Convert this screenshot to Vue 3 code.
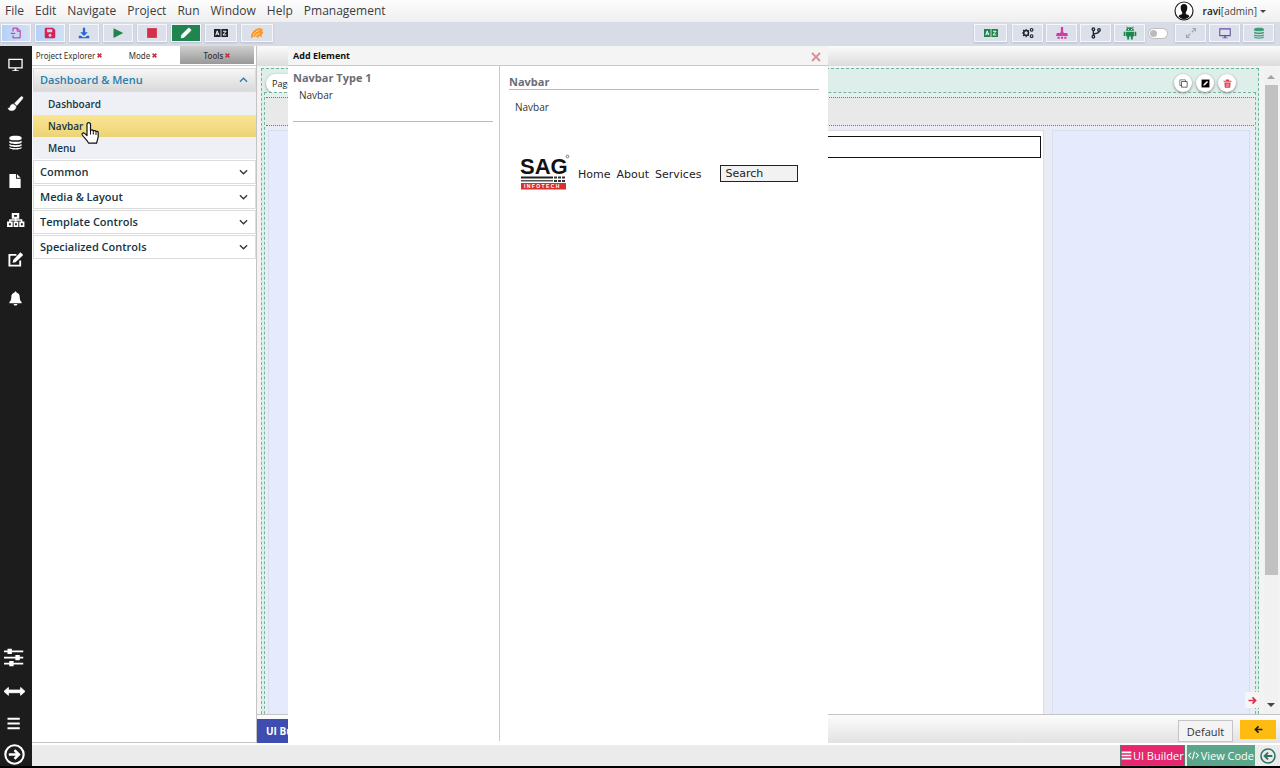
<template>
  <div class="ide">
    <!-- 顶部菜单 -->
    <header class="menubar">
      <nav class="menus">
        <a v-for="m in menus" :key="m" href="#" class="menu-link">{{ m }}</a>
      </nav>
      <button class="user">
        <svg class="avatar" viewBox="0 0 20 20" v-html="icons.avatar" />
        <span><b>ravi</b>[admin]</span>
        <i class="caret" />
      </button>
    </header>

    <!-- 工具栏 -->
    <div class="toolbar">
      <div class="tools">
        <button v-for="t in leftTools" :key="t.icon" class="tool" :class="t.cls" :aria-label="t.label">
          <svg class="ico" viewBox="0 0 16 16" v-html="icons[t.icon]" />
        </button>
      </div>
      <div class="tools right">
        <button v-for="t in rightTools" :key="t.icon" class="tool" :class="t.cls" :aria-label="t.label">
          <svg class="ico" viewBox="0 0 16 16" v-html="icons[t.icon]" />
        </button>
        <input v-model="live" type="checkbox" class="switch" aria-label="Live mode" />
        <button v-for="t in viewTools" :key="t.icon" class="tool" :class="t.cls" :aria-label="t.label">
          <svg class="ico" viewBox="0 0 16 16" v-html="icons[t.icon]" />
        </button>
      </div>
    </div>

    <div class="body">
      <!-- 左侧图标栏 -->
      <aside class="rail">
        <div class="rail-top">
          <button v-for="r in railTop" :key="r" class="rail-btn" :aria-label="r">
            <svg class="rail-ico" viewBox="0 0 16 16" v-html="icons[r]" />
          </button>
        </div>
        <div class="rail-bottom">
          <button v-for="r in railBottom" :key="r" class="rail-btn" :aria-label="r">
            <svg class="rail-ico big" viewBox="0 0 24 24" v-html="icons[r]" />
          </button>
        </div>
      </aside>

      <div class="main">
        <div class="workspace">
          <section class="panel">
            <div class="tabs">
              <button v-for="t in tabs" :key="t" class="tab" :class="{ active: t === activeTab }" @click="activeTab = t">
                {{ t }} <svg class="tab-x" viewBox="0 0 8 8" v-html="icons.cross" />
              </button>
            </div>
            <div class="accordion">
              <div v-for="g in groups" :key="g.title" class="group">
                <button class="group-head" :class="{ open: g.title === openGroup }" @click="openGroup = g.title">
                  {{ g.title }}
                  <svg class="chev" viewBox="0 0 10 6"><path d="M1 1l4 4 4-4" fill="none" stroke="currentColor" stroke-width="1.4" /></svg>
                </button>
                <ul v-if="g.title === openGroup && g.items.length" class="items">
                  <li v-for="it in g.items" :key="it">
                    <button class="item" :class="{ hover: it === current }" @click="current = it">{{ it }}</button>
                  </li>
                </ul>
              </div>
            </div>
          </section>

          <section class="editor">
            <div class="editor-top" />
            <div class="stage">
              <div class="page">
                <div class="page-head">
                  <span class="page-tag">Page</span>
                  <div class="page-actions">
                    <button class="round" aria-label="Copy"><svg viewBox="0 0 16 16" v-html="icons.copy" /></button>
                    <button class="round" aria-label="Edit"><svg viewBox="0 0 16 16" v-html="icons.editBox" /></button>
                    <button class="round red" aria-label="Delete"><svg viewBox="0 0 16 16" v-html="icons.trash" /></button>
                  </div>
                </div>
                <div class="page-inner">
                  <div class="row-strip" />
                  <div class="cols">
                    <div class="col side" />
                    <div class="col center"><input class="field" type="text" aria-label="Field" /></div>
                    <div class="col side" />
                  </div>
                </div>
                <button class="next" aria-label="Next"><svg viewBox="0 0 16 16" v-html="icons.arrow" /></button>
              </div>
              <div class="scroll">
                <i class="sc-arrow up" />
                <div class="sc-track"><div class="sc-thumb" /></div>
                <i class="sc-arrow down" />
              </div>
            </div>
            <div class="editor-foot">
              <button class="ui-tab">UI Builder</button>
              <div class="foot-right">
                <button class="default-btn">Default</button>
                <button class="back-btn" aria-label="Back"><svg viewBox="0 0 16 16" v-html="icons.arrow" /></button>
              </div>
            </div>
          </section>

          <!-- 添加元素弹窗 -->
          <div class="dialog" role="dialog" aria-label="Add Element">
            <div class="dialog-head">
              Add Element
              <button class="close" aria-label="Close"><svg viewBox="0 0 10 10"><path d="M1 1l8 8M9 1L1 9" stroke="currentColor" stroke-width="1.8" /></svg></button>
            </div>
            <div class="dialog-body">
              <div class="types">
                <h3>Navbar Type 1</h3>
                <a href="#" class="type-link">Navbar</a>
              </div>
              <div class="preview">
                <h3>Navbar</h3>
                <p>Navbar</p>
                <div class="sample">
                  <svg class="logo" viewBox="0 0 50 37">
                    <text x="0" y="20" class="logo-name">SAG</text>
                    <circle cx="47.500" cy="2.500" r="1.300" fill="none" stroke="#555" stroke-width="0.800" />
                    <path d="M1 22.500h32v2H1z" fill="#222" />
                    <path d="M1 26h32v1.500H1z" fill="#555" />
                    <path d="M34 22.500h3v2h-3zM38 22.500h3v2h-3zM42 22.500h3v2h-3zM34 26h3v2h-3zM38 26h3v2h-3zM42 26h3v2h-3z" fill="#333" />
                    <path d="M1 29h45v6.500H1z" fill="#d9302c" />
                    <text x="4" y="34" class="logo-sub">I N F O T E C H</text>
                  </svg>
                  <a href="#">Home</a>
                  <a href="#">About</a>
                  <a href="#">Services</a>
                  <input class="search" type="text" placeholder="Search" aria-label="Search" />
                </div>
              </div>
            </div>
          </div>
        </div>

        <footer class="status">
          <button class="st pink"><svg viewBox="0 0 16 16" v-html="icons.bars" />UI Builder</button>
          <button class="st mint"><svg viewBox="0 0 16 16" v-html="icons.code" />View Code</button>
          <button class="st-round" aria-label="Collapse"><svg viewBox="0 0 24 24" v-html="icons.circleRight" /></button>
        </footer>
      </div>
    </div>

    <svg class="cursor" viewBox="0 0 18 24">
      <path d="M6 13V3a1.800 1.800 0 0 1 3.500 0v7c.3-1.500 2.700-1.400 2.900.3.500-1.200 2.400-1 2.600.6.500-1 2.100-.7 2.200.7v4c0 2.500-1.200 3.500-1.600 6.500H7.500C6.500 19.500 3.600 17.500 1.300 14c-.9-1.600.8-2.600 2.200-1.600L6 14.600z" fill="#fff" stroke="#111" stroke-width="1.200" stroke-linejoin="round" />
      <path d="M9.500 10v3.500M12.300 10.500v3M15 11.500v2.500" stroke="#111" stroke-width="1" />
    </svg>
  </div>
</template>

<script setup>
import { ref } from 'vue'

const menus = ['File', 'Edit', 'Navigate', 'Project', 'Run', 'Window', 'Help', 'Pmanagement']
const tabs = ['Project Explorer', 'Mode', 'Tools']
const groups = [
  { title: 'Dashboard & Menu', items: ['Dashboard', 'Navbar', 'Menu'] },
  { title: 'Common', items: [] },
  { title: 'Media & Layout', items: [] },
  { title: 'Template Controls', items: [] },
  { title: 'Specialized Controls', items: [] },
]

const activeTab = ref('Tools')
const openGroup = ref('Dashboard & Menu')
const current = ref('Navbar')
const live = ref(false)

const leftTools = [
  { icon: 'file', label: 'New', cls: 'magenta blue-bg' },
  { icon: 'save', label: 'Save', cls: 'crimson blue-bg' },
  { icon: 'download', label: 'Download', cls: 'blue' },
  { icon: 'play', label: 'Run', cls: 'green' },
  { icon: 'stop', label: 'Stop', cls: 'red' },
  { icon: 'pencil', label: 'Edit', cls: 'solid' },
  { icon: 'az', label: 'Translate', cls: 'black wide' },
  { icon: 'swift', label: 'Deploy', cls: 'orange wide' },
]
const rightTools = [
  { icon: 'az', label: 'Language', cls: 'green large' },
  { icon: 'cogs', label: 'Settings', cls: 'black' },
  { icon: 'stamp', label: 'Publish', cls: 'violet' },
  { icon: 'branch', label: 'Branch', cls: 'black' },
  { icon: 'android', label: 'Android', cls: 'green large' },
]
const viewTools = [
  { icon: 'expand', label: 'Expand', cls: 'grey' },
  { icon: 'screen', label: 'Preview', cls: 'purple' },
  { icon: 'db', label: 'Database', cls: 'teal' },
]
const railTop = ['screen', 'brush', 'db', 'page', 'network', 'edit', 'bell']
const railBottom = ['sliders', 'leftRight', 'menu', 'circleRight']

const icons = {
  avatar: '<circle cx="10" cy="10" r="9" fill="#fff" stroke="#222" stroke-width="1.200"/><path d="M10 3c2.500 0 3.600 1.800 3.300 4.200-.2 2-.9 3.200-1.500 4v1.800c1.500.7 3 .9 3.700 2.200A8.500 8.500 0 0 1 10 18.500a8.500 8.500 0 0 1-5.500-3.300c.7-1.300 2.200-1.500 3.700-2.200v-1.800c-.6-.8-1.300-2-1.500-4C6.400 4.800 7.500 3 10 3z" fill="#111"/>',
  file: '<path d="M4 6V1.500h6L13.500 5V14.500H4V11M9.500 1.500v4h4M1 8.500h6" fill="none" stroke="currentColor" stroke-width="1.300"/>',
  save: '<path d="M1 2.500A1.500 1.500 0 0 1 2.500 1H12l3 3v9.500a1.500 1.500 0 0 1-1.500 1.500h-11A1.500 1.500 0 0 1 1 13.500zM4 3v4h7V3zm4 6a2 2 0 1 0 0 4 2 2 0 0 0 0-4z" fill="currentColor" fill-rule="evenodd"/>',
  download: '<path d="M6.500 1h3v6H13l-5 5-5-5h3.500zM1 11.500h3l2.500 2h3l2.500-2h3V15H1z" fill="currentColor"/>',
  play: '<path d="M2 1.500v13L15 8z" fill="currentColor"/>',
  stop: '<path d="M1.500 1.500h13v13h-13z" fill="currentColor"/>',
  pencil: '<path d="M1.500 14.500l.8-4L11 1.800c.5-.5 1.200-.5 1.700 0l1.500 1.500c.5.500.5 1.200 0 1.700L5.500 13.700z" fill="currentColor" stroke="currentColor"/>',
  az: '<path d="M0 3.500h7.500v9H0zM8.500 3.500H16v9H8.500z" fill="currentColor"/><path d="M2 10.500l1.700-5 1.800 5M2.700 9h2.200M10.300 6h3.500l-3.500 4.200h3.700" fill="none" stroke="#fff" stroke-width="1.100"/>',
  swift: '<path d="M1 14c0-5 2-9 7-11 2-1 4-1 5 0l2 1-1 2 1.500 2-2 1c.5 1.500 0 3-.5 4l-2-2-2 3c-1-1-1-2-3-2s-3 1-5 2z" fill="currentColor"/><path d="M4 11c1-3 3-5 6-6M6 12c1-2 3-3 5-3.500" fill="none" stroke="#fdebd2" stroke-width="0.900"/>',
  cogs: '<circle cx="5.500" cy="8" r="3.200" fill="none" stroke="currentColor" stroke-width="2"/><path d="M5.500 2.500v2M5.500 11.500v2M0 8h2M1.500 4l1.500 1.500M1.500 12L3 10.500M9 4.500L8 5.500M9 11.500l-1-1" stroke="currentColor" stroke-width="1.500"/><circle cx="12.800" cy="3.800" r="1.800" fill="none" stroke="currentColor" stroke-width="1.500"/><circle cx="12.800" cy="12.200" r="1.800" fill="none" stroke="currentColor" stroke-width="1.500"/>',
  stamp: '<path d="M6.500 0h3v6l1 2h4.500l1 4H0l1-4h4.500l1-2zM2 13h3v2.500H2zM6.500 13h3v2.500h-3zM11 13h3v2.500h-3z" fill="currentColor"/>',
  branch: '<circle cx="4.500" cy="3" r="1.700" fill="none" stroke="currentColor" stroke-width="1.700"/><circle cx="4.500" cy="13" r="1.700" fill="none" stroke="currentColor" stroke-width="1.700"/><circle cx="12" cy="4" r="1.700" fill="none" stroke="currentColor" stroke-width="1.700"/><path d="M4.500 4.500v7M12 5.500c0 3.500-5 2.500-7.500 4.500" fill="none" stroke="currentColor" stroke-width="1.800"/>',
  android: '<path d="M3.500 5.500a4.500 4 0 0 1 9 0zM3.500 6.500h9V12h-1.300v3.500H9V12H7v3.500H4.800V12H3.500zM.8 6.500h2v5h-2zM13.200 6.500h2v5h-2zM4.500.5l1.500 2-.8.5-1.500-2zM11.500.5L10 2.500l.8.5 1.500-2z" fill="currentColor"/><path d="M5.800 3.500h1v1h-1zM9.200 3.500h1v1h-1z" fill="#fff"/>',
  expand: '<path d="M10 2h4v4M14 2L9 7M6 14H2v-4M2 14l5-5" fill="none" stroke="currentColor" stroke-width="1.500"/>',
  screen: '<path d="M1 2.500h14v9H1z" fill="none" stroke="currentColor" stroke-width="1.400"/><path d="M7 12h2v2h2.500v1h-7v-1H7z" fill="currentColor"/>',
  db: '<path d="M1.500 2.800C1.500.2 14.500.2 14.500 2.800v1.400c0 2-13 2-13 0zM1.500 6c2 1.700 11 1.700 13 0v2c0 2-13 2-13 0zM1.500 9.600c2 1.700 11 1.700 13 0v1.600c0 2-13 2-13 0zM1.500 12.800c2 1.700 11 1.700 13 0v.8c0 2.600-13 2.600-13 0z" fill="currentColor"/>',
  brush: '<path d="M15.300.8c.8.700.5 1.700 0 2.500L9.500 10 7 7.800l6.300-6.500c.6-.6 1.400-1 2-.5zM6 8.800L8.500 11c.2 3-2 4.500-4.500 4.500-2 0-3.500-.8-4-2.500 1 .2 2 0 2.200-1.200C2.500 9.800 4 8.500 6 8.800z" fill="currentColor" stroke="currentColor" stroke-width="0.600"/>',
  page: '<path d="M1.500 0h7v5h5v10h-12zM9.500 0l4 4h-4z" fill="currentColor"/>',
  network: '<path d="M4 0h8v6H4zM-1 9h6v6h-6zM6 9h5v6H6zM12 9h5.500v6H12z" fill="currentColor"/><path d="M6.500 2h3v2h-3zM1 11h2v2H1zM7.500 11h2v2h-2zM13.800 11h2v2h-2z" fill="#1c1c1c"/><path d="M8.200 5v4M2 9.500v-2h12.500v2" fill="none" stroke="currentColor" stroke-width="1.600"/>',
  edit: '<path d="M9 3H1.500v11.500H13V9" fill="none" stroke="currentColor" stroke-width="2"/><path d="M5 11.500l.5-3L12.500 1c.5-.5 1-.5 1.500 0l1.500 1.500c.5.500.5 1 0 1.500L8 11z" fill="currentColor"/>',
  bell: '<path d="M8 .5c.8 0 1 .5 1 1.200 2.500.6 3.500 2.500 3.500 5 0 3 .8 4 2 5v1.300h-13v-1.300c1.200-1 2-2 2-5 0-2.500 1-4.400 3.500-5 0-.7.200-1.200 1-1.200zM6 13.800h4c0 2.300-4 2.300-4 0z" fill="currentColor"/>',
  sliders: '<path d="M0 5h22M0 12h22M0 19h22" stroke="currentColor" stroke-width="2"/><path d="M4 2h5v6H4zM13 9h5v6h-5zM6 16h5v6H6z" fill="currentColor"/>',
  leftRight: '<path d="M0 13l5-4.500V11.500h14V8.500l5 4.500-5 4.500V14.500H5v3z" fill="currentColor" stroke="currentColor"/>',
  menu: '<path d="M4 6.500h14M4 12h14M4 17.500h14" stroke="currentColor" stroke-width="2.400"/>',
  circleRight: '<circle cx="12" cy="12" r="10.500" fill="none" stroke="currentColor" stroke-width="2.400"/><path d="M5.500 12h11M12 7l5 5-5 5" fill="none" stroke="currentColor" stroke-width="3"/>',
  cross: '<path d="M1 1l6 6M7 1L1 7" stroke="currentColor" stroke-width="2.400"/>',
  copy: '<path d="M1.500 1.500h10v10h-10z" fill="none" stroke="currentColor"/><path d="M4.500 4.500h10v10h-10z" fill="#fff" stroke="currentColor" stroke-width="1.200"/>',
  editBox: '<path d="M1 1h14v14H1z" fill="#000"/><path d="M4 12l1-3 5.500-5.500 2 2L7 11z" fill="#fff"/>',
  trash: '<path d="M5 1h6v2h4v2H1V3h4zM2.500 6h11l-.7 9.500H3.200z" fill="currentColor"/><path d="M6 8v6M8 8v6M10 8v6" stroke="#f3b9be"/>',
  arrow: '<path d="M1 8h12M8 2.500L13.500 8 8 13.500" fill="none" stroke="currentColor" stroke-width="3"/>',
  bars: '<path d="M1 3.500h14M1 8h14M1 12.500h14" stroke="currentColor" stroke-width="2.500"/>',
  code: '<path d="M4.500 4L1 8l3.500 4M11.500 4L15 8l-3.500 4M9.500 2.500l-3 11" fill="none" stroke="currentColor" stroke-width="1.600"/>',
}
</script>

<style>
body { background: #fff; overflow: hidden; }
</style>

<style scoped>
.ide {
  height: 100vh;
  box-sizing: border-box;
  display: flex;
  flex-direction: column;
  position: relative;
  border-bottom: 2px solid #000;
  font-family: 'Open Sans', 'Noto Sans', sans-serif;
  color: #333;
}
.ide *, .ide *::before { box-sizing: border-box; }
button { font-family: inherit; margin: 0; padding: 0; border: none; background: none; cursor: pointer; }
a { text-decoration: none; color: inherit; }
svg { display: block; overflow: visible; flex-shrink: 0; }

/* 菜单 */
.menubar {
  height: 22px;
  flex-shrink: 0;
  display: flex;
  justify-content: space-between;
  background: linear-gradient(#fdfdfd, #f0eff0);
}
.menus { display: flex; gap: 11px; padding-left: 5px; }
.menu-link { font-size: 12px; line-height: 22px; color: #3c3c3c; }
.user { display: flex; align-items: center; gap: 9px; padding-right: 14px; font-size: 10px; color: #444; }
.user b { color: #222; font-weight: 600; }
.avatar { width: 20px; height: 20px; }
.caret { border: 3px solid transparent; border-top-color: #444; border-bottom: 0; margin-left: -6px; }

/* 工具栏 */
.toolbar {
  height: 24px;
  flex-shrink: 0;
  display: flex;
  justify-content: space-between;
  align-items: center;
  padding: 0 6px 2px 1px;
  background: #d8dce7;
}
.tools { display: flex; align-items: center; gap: 4px; }
.tools.right { gap: 3px; }
.tool {
  width: 30px;
  height: 18px;
  display: flex;
  align-items: center;
  justify-content: center;
  border: 1px solid #f5f7fb;
  background: #dce0ea;
  box-shadow: 0 1px 2px #b9bfce;
}
.right .tool { width: 31px; }
.right .tool:first-child { width: 33px; margin-right: 2px; }
.tool.wide { width: 32px; }
.ico { width: 12px; height: 12px; }
.tool.blue-bg { background: linear-gradient(90deg, #b5d1f8, #d3e0f5); }
.magenta { color: #c3248d; }
.crimson { color: #dc1f4c; }
.blue { color: #2766d2; }
.green { color: #1d854c; }
.red { color: #d63049; }
.tool.solid { background: #1f8450; color: #fff; }
.black { color: #1d2126; }
.orange { color: #fb9a26; }
.violet { color: #d63ba4; }
.grey { color: #a3a6b0; }
.purple { color: #6a4cae; }
.teal { color: #3f9c78; }
.wide .ico, .large .ico { width: 14px; height: 14px; }
.switch {
  appearance: none;
  width: 20px;
  height: 11px;
  margin: 0 4px 0 0;
  padding: 1px;
  border: 1px solid #bbb;
  border-radius: 6px;
  background: #fff;
}
.switch::before { content: ''; display: block; width: 7px; height: 7px; border-radius: 50%; background: #bbb; }
.switch:checked::before { margin-left: 9px; }

.body { flex: 1; display: flex; min-height: 0; }

/* 图标栏 */
.rail {
  width: 32px;
  flex-shrink: 0;
  display: flex;
  flex-direction: column;
  justify-content: space-between;
  background: #1c1c1c;
  color: #fff;
}
.rail-btn { display: flex; align-items: center; justify-content: center; width: 31px; color: #fff; }
.rail-top .rail-btn { height: 39px; padding-bottom: 2px; }
.rail-bottom .rail-btn { height: 33px; width: 28px; }
.rail-bottom .rail-btn:last-child { height: 26px; padding-top: 2px; }
.rail-ico { width: 15px; height: 15px; }
.rail-ico.big { width: 21px; height: 21px; }

.main { flex: 1; min-width: 0; display: flex; flex-direction: column; }
.workspace { flex: 1; min-height: 0; display: flex; position: relative; padding-bottom: 2px; }

/* 工具面板 */
.panel { width: 225px; flex-shrink: 0; border-right: 1px solid #c4c4c4; border-bottom: 1px solid #c4c4c4; background: #fff; }
.tabs { display: flex; height: 20px; padding-right: 2px; border-bottom: 1px solid #ccc; }
.tab { flex: 1; display: flex; align-items: center; justify-content: center; gap: 2px; height: 18px; font-family: 'Noto Sans', sans-serif; font-size: 8px; color: #333; white-space: nowrap; }
.tab.active { background: linear-gradient(#cfcfcf, #989898); font-weight: 500; }
.tab-x { width: 5px; height: 5px; color: #c62f42; }
.accordion { display: flex; flex-direction: column; gap: 1px; padding: 2px 0 0 1px; }
.group-head {
  width: 100%;
  height: 24px;
  display: flex;
  align-items: center;
  justify-content: space-between;
  padding: 0 7px 1px 6px;
  border: 1px solid #dcdcdc;
  background: #fff;
  font-size: 11px;
  font-weight: 600;
  color: #163442;
}
.group-head.open { background: linear-gradient(#f7f7f7, #d9d9d9); color: #2a7eae; }
.chev { width: 9px; height: 6px; color: #333; }
.open .chev { transform: rotate(180deg); color: #2a7eae; }
.items { list-style: none; margin: 0; padding: 1px 0 0; background: #eef0f6; }
.item { display: block; width: 100%; height: 22px; padding: 0 15px; text-align: left; font-size: 10px; font-weight: 600; color: #163442; }
.item.hover { background: linear-gradient(#fae593, #ecd376); }

/* 画布 */
.editor { flex: 1; min-width: 0; display: flex; flex-direction: column; }
.editor-top { height: 20px; flex-shrink: 0; background: linear-gradient(#fafafa, #dddcdc); }
.stage { flex: 1; min-height: 0; display: flex; gap: 5px; padding: 2px 2px 0 4px; background: #f3f3f3; }
.page {
  flex: 1;
  display: flex;
  flex-direction: column;
  position: relative;
  border: 1px dashed #6fb79b;
  border-bottom: 0;
  background: #deeeea;
  padding: 0 2px;
}
.page-head { height: 23px; flex-shrink: 0; display: flex; justify-content: space-between; align-items: flex-end; padding: 0 20px 0 2px; }
.page-tag { display: flex; align-items: center; height: 19px; padding: 0 6px; margin-bottom: -1px; border-radius: 10px; background: #fff; box-shadow: 0 1px 3px #999; font-size: 9px; color: #222; }
.page-actions { display: flex; gap: 4px; }
.round { width: 18px; height: 18px; display: flex; align-items: center; justify-content: center; border-radius: 50%; background: #fff; box-shadow: 0 1px 3px #888; color: #222; z-index: 1; }
.round svg { width: 9px; height: 9px; }
.round.red { color: #d9414e; }
.page-inner { flex: 1; display: flex; flex-direction: column; border: 1px dashed #6fb79b; border-bottom: 0; padding: 4px 1px 0; background: #e6efee; }
.row-strip { height: 29px; flex-shrink: 0; border: 1px dotted #777; border-width: 1px 0; background: #eae9e9; }
.cols { flex: 1; display: flex; gap: 8px; padding: 4px 4px 0 2px; background: #e8ecf5; }
.side { width: 198px; flex-shrink: 0; border: 1px solid #d9deea; border-bottom: 0; background: #e5eafc; }
.center { flex: 1; padding: 5px 2px; border: 1px solid #ddd; border-width: 1px 1px 0 0; background: #fff; }
.field { display: block; width: 100%; height: 22px; border: 1px solid #111; background: #fff; }
.next { position: absolute; right: -1px; bottom: 6px; width: 14px; height: 16px; display: flex; align-items: center; justify-content: center; background: #f5f5f8; color: #d8324a; }
.next svg { width: 9px; height: 9px; }

.scroll { width: 14px; flex-shrink: 0; display: flex; flex-direction: column; align-items: center; background: #f1f1f1; }
.sc-arrow { border: 4px solid transparent; flex-shrink: 0; }
.sc-arrow.up { border-top: 0; border-bottom-color: #a3a3a3; margin: 7px 0 6px; }
.sc-arrow.down { border-bottom: 0; border-top-color: #444; margin: 6px 0 7px; }
.sc-track { flex: 1; width: 13px; }
.sc-thumb { height: 80%; background: #c1c1c1; }

.editor-foot {
  height: 29px;
  flex-shrink: 0;
  display: flex;
  justify-content: space-between;
  align-items: flex-end;
  border-top: 1px solid #c4c4c4;
  background: linear-gradient(#fcfcfc, #e2e2e2);
}
.ui-tab { height: 24px; padding: 0 9px; background: #3f4db0; color: #fff; font-size: 10px; font-weight: 700; }
.foot-right { display: flex; gap: 7px; padding-right: 4px; align-self: flex-start; padding-top: 5px; }
.default-btn { width: 55px; height: 22px; padding-top: 1px; border: 1px solid #c4c4c4; background: #f4f4f4; font-size: 11px; color: #333; }
.back-btn { width: 36px; height: 19px; display: flex; align-items: center; justify-content: center; background: #febb12; color: #222; }
.back-btn svg { width: 9px; height: 9px; transform: rotate(180deg); }

/* 弹窗 */
.dialog { position: absolute; top: 0; bottom: 0; left: 256px; width: 540px; display: flex; flex-direction: column; background: #fff; }
.dialog-head {
  height: 20px;
  flex-shrink: 0;
  display: flex;
  align-items: center;
  justify-content: space-between;
  padding: 0 7px 0 5px;
  border-bottom: 1px solid #c8c8c8;
  background: #f4f4f4;
  font-size: 9px;
  font-weight: 700;
  color: #111;
}
.close { color: #d98f94; padding-top: 3px; }
.close svg { width: 10px; height: 10px; }
.dialog-body { flex: 1; display: flex; margin-bottom: 4px; }
.dialog h3 { margin: 0; font-size: 11px; line-height: 15px; font-weight: 700; color: #6b6d74; }
.types { width: 212px; padding: 4px 6px 0 5px; border-right: 1px solid #c8c8c8; }
.type-link { display: block; height: 37px; padding-left: 6px; border-bottom: 1px solid #bbb; font-size: 10px; line-height: 20px; }
.preview { flex: 1; padding: 8px 9px 0; font-size: 10px; }
.preview h3 { border-bottom: 1px solid #bbb; }
.preview p { margin: 7px 0 0 6px; line-height: 20px; }
.sample { display: flex; align-items: center; margin: 37px 0 0 11px; font-family: 'DejaVu Sans', sans-serif; font-size: 11px; color: #222; }
.sample a { margin-right: 6px; padding-top: 3px; }
.logo { width: 50px; height: 37px; margin-right: 8px; }
.logo-name { font: 700 22px 'Liberation Sans', sans-serif; fill: #111; }
.logo-sub { font: 700 5px 'Liberation Sans', sans-serif; fill: #fff; }
.search { width: 78px; height: 17px; margin: 2px 0 0 13px; padding: 0 4px; border: 1px solid #222; background: #f2f2f2; font: inherit; color: #222; }
.search::placeholder { color: #222; }

/* 底部状态栏 */
.status { height: 21px; flex-shrink: 0; display: flex; justify-content: flex-end; align-items: center; gap: 2px; padding-right: 4px; background: #ebebeb; }
.st { height: 21px; display: flex; align-items: center; gap: 1px; padding: 0; border: 1px solid #5c7a72; font-size: 11px; color: #fff; }
.st svg { width: 11px; height: 11px; }
.pink { background: #e6276f; }
.mint { gap: 2px; background: #5ba68a; border-color: #5ba68a; }
.st-round { margin-left: 3px; color: #2f7566; }
.st-round svg { width: 16px; height: 16px; transform: rotate(180deg); }

.cursor { position: absolute; left: 81px; top: 121px; width: 18px; height: 24px; }
</style>
